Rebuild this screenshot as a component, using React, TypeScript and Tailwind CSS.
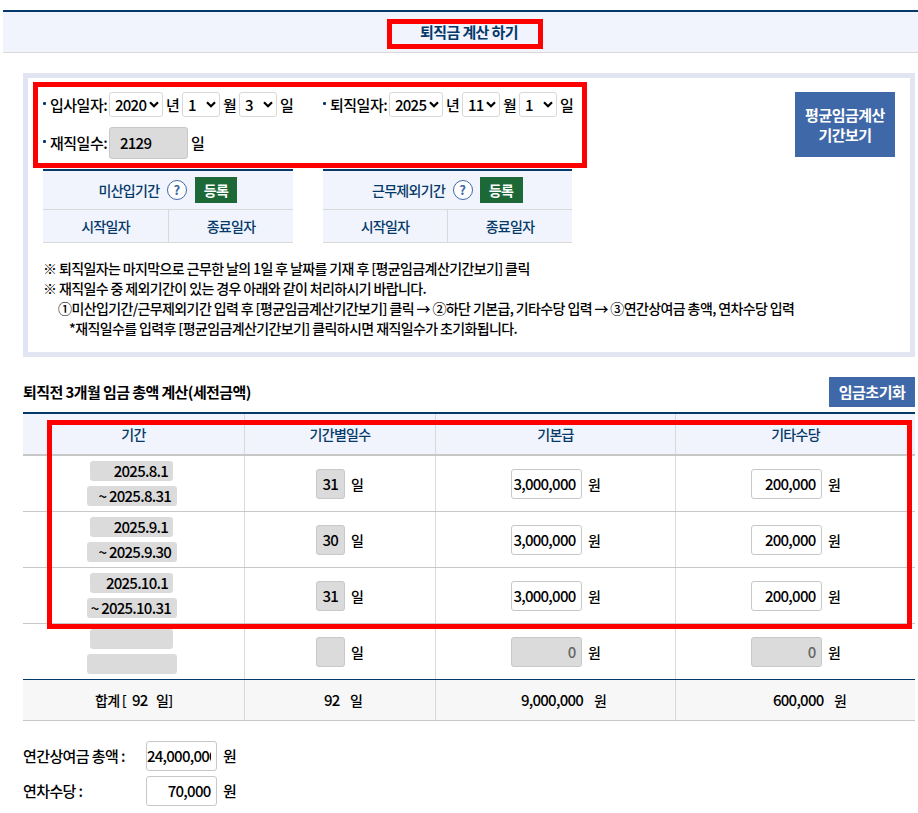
import React from 'react';

const PERIODS = [
  { from: '2025.8.1', to: '~ 2025.8.31', days: '31', base: '3,000,000', extra: '200,000' },
  { from: '2025.9.1', to: '~ 2025.9.30', days: '30', base: '3,000,000', extra: '200,000' },
  { from: '2025.10.1', to: '~ 2025.10.31', days: '31', base: '3,000,000', extra: '200,000' },
  { from: '', to: '', days: '', base: '0', extra: '0', disabled: true },
];

const COLS = 'grid grid-cols-[222px_191px_240px_239px]';

const Select = ({ value, className }: { value: string; className: string }) => (
  <div className={`flex h-[25px] items-center justify-between rounded-[3px] border border-[#d9d9d9] bg-white pl-[5px] pr-[3px] text-[15px] tracking-[-0.75px] ${className}`}>
    <span className="pt-[2px]">{value}</span>
    <svg width="10" height="7" viewBox="0 0 10 7" fill="none" stroke="#000" strokeWidth="2.2" className="mb-px">
      <path d="M1 1.2 L5 5.2 L9 1.2" />
    </svg>
  </div>
);

const DateField = ({ label, year, month, day }: { label: string; year: string; month: string; day: string }) => (
  <div className="flex h-[25px] items-center text-[15px]">
    <i className="mb-[3px] mr-1 h-[3px] w-[3px] rounded-[1px] bg-[#04396a]" />
    <span className="w-[59px] pt-px tracking-[-0.5px]">{label}</span>
    <Select value={year} className="w-[54px]" />
    <span className="w-[19px] pl-[3px] pt-px">년</span>
    <Select value={month} className="w-[38px]" />
    <span className="w-[19px] pl-[3px] pt-px">월</span>
    <Select value={day} className="w-[38px]" />
    <span className="w-4 pl-[3px] pt-px">일</span>
  </div>
);

const ExcludeTable = ({ title, width, pad, first, gap }: { title: string; width: string; pad: string; first: string; gap: string }) => (
  <div className={`border-t-2 border-[#04396a] bg-[#f1f4fc] text-sm tracking-[-0.7px] text-[#04396a] ${width}`}>
    <div className={`flex h-[39px] items-center border-b border-[#d9d9d9] ${pad}`}>
      <span>{title}</span>
      <span className="ml-[7.5px] flex h-5 w-5 items-center justify-center rounded-full border border-[#3f68a8] bg-white text-[13px] font-bold tracking-normal text-[#3f68a8]">?</span>
      <button className={`h-[26px] bg-[#1c6836] text-sm font-bold tracking-[-0.6px] text-white ${gap}`}>등록</button>
    </div>
    <div className="flex h-[33px] border-b border-[#d9d9d9] text-center leading-[33px]">
      <span className={`border-r border-[#d9d9d9] ${first}`}>시작일자</span>
      <span className="flex-1">종료일자</span>
    </div>
  </div>
);

const Amount = ({ value, disabled }: { value: string; disabled?: boolean }) => (
  <div className={`flex h-[30px] w-[71px] items-center justify-end rounded-[3px] border border-[#c8c8c8] pr-[5.5px] text-[15px] tracking-[-0.75px] ${disabled ? 'bg-[#dbdbdb] text-[#666]' : 'bg-white'}`}>
    {value}
  </div>
);

export default function App() {
  return (
    <div className="relative h-[813px] w-[918px] overflow-hidden bg-white pt-[10px] font-['Noto_Sans_CJK_KR','Noto_Sans_KR',sans-serif] font-medium text-black">
      <h1 className="ml-[3px] h-[43px] border-b border-t-2 border-b-[#d9d9d9] border-t-[#04396a] bg-[#f1f4fc] pl-[417px] text-[15px] font-bold leading-[40px] tracking-[-0.6px] text-[#04396a]">
        퇴직금 계산 하기
      </h1>

      <section className="ml-[23px] mt-5 flex h-[284px] w-[892px] justify-between border-5 border-[#e1e5f1] pl-[15px] pr-[15px] pt-[14px]">
        <div>
          <div className="flex gap-[30px]">
            <DateField label="입사일자:" year="2020" month="1" day="3" />
            <DateField label="퇴직일자:" year="2025" month="11" day="1" />
          </div>
          <div className="mt-[10px] flex h-8 items-center text-[15px]">
            <i className="mb-[3px] mr-1 h-[3px] w-[3px] rounded-[1px] bg-[#04396a]" />
            <span className="w-[59px] tracking-[-0.5px]">재직일수:</span>
            <div className="h-8 w-[79px] rounded-[3px] border border-[#c8c8c8] bg-[#dbdbdb] pl-[10px] leading-[30px] tracking-[-0.75px]">2129</div>
            <span className="pl-[3px]">일</span>
          </div>
          <div className="mt-[10px] flex gap-[30px]">
            <ExcludeTable title="미산입기간" width="w-[250px]" pad="pl-[55.5px]" first="w-[126px]" gap="ml-2 w-[42px]" />
            <ExcludeTable title="근무제외기간" width="w-[249px]" pad="pl-[49px]" first="w-[125px]" gap="ml-[7px] w-[43px]" />
          </div>
          <div className="mt-[15px] whitespace-pre text-sm leading-5 tracking-[-0.615px]">
            <p>※ 퇴직일자는 마지막으로 근무한 날의 1일 후 날짜를 기재 후 [평균임금계산기간보기] 클릭</p>
            <p>※ 재직일수 중 제외기간이 있는 경우 아래와 같이 처리하시기 바랍니다.</p>
            <p className="pl-[15px]">①미산입기간/근무제외기간 입력 후 [평균임금계산기간보기] 클릭 → ②하단 기본급, 기타수당 입력 → ③연간상여금 총액, 연차수당 입력</p>
            <p className="pl-[26px]">*재직일수를 입력후 [평균임금계산기간보기] 클릭하시면 재직일수가 초기화됩니다.</p>
          </div>
        </div>
        <button className="-ml-24 h-[65px] w-[100px] bg-[#3f68a8] text-[15px] font-bold leading-5 tracking-[-0.5px] text-white">
          평균임금계산<br />기간보기
        </button>
      </section>

      <div className="ml-[23px] mt-5 flex h-[30px] w-[892px] items-center justify-between">
        <h2 className="text-[15px] font-bold tracking-[-0.59px]">퇴직전 3개월 임금 총액 계산(세전금액)</h2>
        <button className="h-[30px] w-[86px] bg-[#3f68a8] text-[15px] font-bold tracking-[-0.5px] text-white">임금초기화</button>
      </div>

      <div className="ml-[23px] mt-[5px] w-[892px] border-t-2 border-[#04396a] text-sm">
        <div className={`${COLS} h-[42px] divide-x divide-[#d9d9d9] border-b-2 border-[#c8c8c8] bg-[#f1f4fc] text-center leading-10 tracking-[-0.7px] text-[#04396a]`}>
          <span>기간</span>
          <span>기간별일수</span>
          <span>기본급</span>
          <span>기타수당</span>
        </div>
        {PERIODS.map((p, i) => (
          <div key={i} className={`${COLS} h-14 divide-x divide-[#d9d9d9] border-b ${p.disabled ? 'border-[#04396a]' : 'border-[#c8c8c8]'}`}>
            <div className="flex flex-col gap-[5px] pt-[5px] text-[15px] tracking-[-0.75px]">
              <span className="ml-[67px] h-5 w-[83px] rounded-[3px] bg-[#dbdbdb] pr-[5px] text-right leading-5">{p.from}</span>
              <span className="ml-16 h-5 w-[90px] whitespace-nowrap rounded-[3px] bg-[#dbdbdb] pr-[6px] text-right leading-5">{p.to}</span>
            </div>
            <div className="flex items-center pl-[71px]">
              <span className="h-[30px] w-[29px] rounded-[3px] border border-[#c8c8c8] bg-[#dbdbdb] pr-[6px] text-right text-[15px] leading-[28px] tracking-[-0.75px]">{p.days}</span>
              <span className="ml-[6px]">일</span>
            </div>
            <div className="flex items-center pl-[75px]">
              <Amount value={p.base} disabled={p.disabled} />
              <span className="ml-[6px]">원</span>
            </div>
            <div className="flex items-center pl-[75px]">
              <Amount value={p.extra} disabled={p.disabled} />
              <span className="ml-[6px]">원</span>
            </div>
          </div>
        ))}
        <div className={`${COLS} h-[41px] divide-x divide-[#d9d9d9] border-b border-[#c8c8c8] bg-[#f7f7f7] leading-10`}>
          <div className="flex pl-[72px] tracking-[-0.7px]">
            <span className="w-[37px]">합계 [</span>
            <span className="w-6 text-[15px]">92</span>
            <span>일]</span>
          </div>
          <div className="flex pl-[79px]">
            <span className="w-[26px] text-[15px] tracking-[-0.75px]">92</span>
            <span>일</span>
          </div>
          <div className="flex pl-[85px]">
            <span className="w-[73px] text-[15px] tracking-[-0.75px]">9,000,000</span>
            <span>원</span>
          </div>
          <div className="flex pl-[97px]">
            <span className="w-[61px] text-[15px] tracking-[-0.75px]">600,000</span>
            <span>원</span>
          </div>
        </div>
      </div>

      <div className="ml-[23px] mt-5 flex flex-col gap-[5px] text-[15px]">
        <div className="flex items-center">
          <span className="w-[123px] tracking-[-0.6px]">연간상여금 총액 :</span>
          <div className="flex h-[30px] w-[71px] items-center rounded-[3px] border border-[#c8c8c8] pr-[5px] tracking-[-0.75px]">
            <span className="overflow-hidden">24,000,000</span>
          </div>
          <span className="ml-[6px]">원</span>
        </div>
        <div className="flex items-center">
          <span className="w-[123px] tracking-[-0.6px]">연차수당 :</span>
          <Amount value="70,000" />
          <span className="ml-[6px]">원</span>
        </div>
      </div>

      {/* 강조 표시 */}
      <div className="absolute left-[387px] top-[19px] h-[30px] w-[156px] border-5 border-[#f00]" />
      <div className="absolute left-[33px] top-[82px] h-[86px] w-[554px] border-5 border-[#f00]" />
      <div className="absolute left-[47px] top-[420px] h-[209px] w-[865px] border-5 border-[#f00]" />
    </div>
  );
}
